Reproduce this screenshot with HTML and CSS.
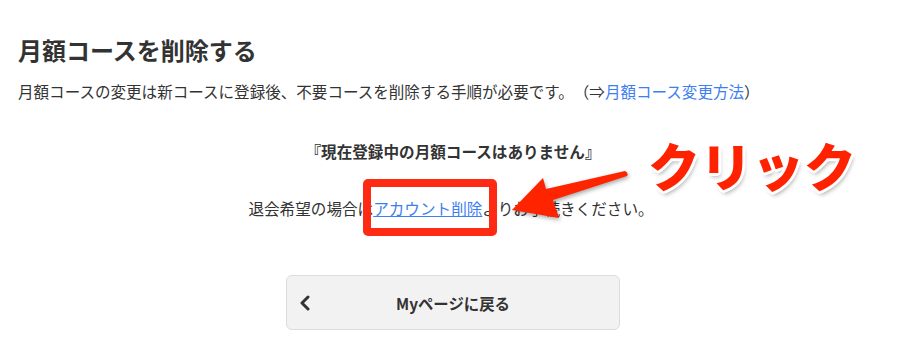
FILE: index.html
```html
<!DOCTYPE html>
<html lang="ja">
<head>
    <meta charset="UTF-8">
    <meta name="viewport" content="width=device-width, initial-scale=1.0">
    <title>月額コースを削除する</title>
    <link rel="stylesheet" href="styles.css">
</head>
<body>
    <div class="page">
        <h1>月額コースを削除する</h1>
        <p class="lead">月額コースの変更は新コースに登録後、不要コースを削除する手順が必要です。（⇒<a href="#" class="plain">月額コース変更方法</a>）</p>

        <p class="status">『現在登録中の月額コースはありません』</p>
        <p class="notice">退会希望の場合は<a href="#">アカウント削除</a>よりお手続きください。</p>

        <div class="actions">
            <a href="#" class="back">
                <svg class="chev" width="12" height="16" viewBox="0 0 12 16"><path d="M9 2 L3 8 L9 14" fill="none" stroke="#333" stroke-width="3" stroke-linecap="round" stroke-linejoin="round"/></svg>
                <span>Myページに戻る</span>
            </a>
        </div>

        <!-- annotations -->
        <div class="mark"></div>
        <svg class="arrow" width="140" height="70" viewBox="0 0 140 70">
            <path d="M7 50 L38 18 L41 29 L120 11 Q124 13 122 16 L48 40 L54 58 Z" fill="#ff2400"/>
        </svg>
        <div class="click">クリック</div>
    </div>
</body>
</html>
```

FILE: styles.css
```css
body { margin: 0; font-family: "Noto Sans CJK JP", "Noto Sans", sans-serif; color: #333; background: #fff; text-spacing-trim: space-all; }
.page { position: relative; padding: 32px 12px 0 18px; height: 320px; }
h1 { font-size: 24px; line-height: 36px; margin: 0; font-weight: bold; color: #333; }
.lead { font-size: 15.55px; line-height: 24px; margin: 11px 0 0; }
.lead a, .notice a { color: #3d7ef0; }
.lead a.plain { text-decoration: none; }
.status { font-size: 15.6px; line-height: 24px; margin: 36px 0 0; text-align: center; font-weight: bold; }
.notice { font-size: 15.6px; line-height: 24px; margin: 33px 4px 0 0; text-align: center; }
.actions { display: flex; justify-content: center; margin-top: 55px; }
.back { width: 334px; height: 55px; box-sizing: border-box; display: grid; grid-template-columns: 40px 1fr 40px; align-items: center; background: #f2f2f2; border: 1px solid #dcdcdc; border-radius: 6px; color: #333; text-decoration: none; font-weight: bold; font-size: 15.4px; }
.back .chev { margin-left: 12px; }
.back span { text-align: center; }
.mark { position: absolute; left: 363px; top: 179px; width: 134px; height: 57px; box-sizing: border-box; border: 8px solid #ff2a14; border-radius: 5px; }
.arrow { position: absolute; left: 505px; top: 160px; filter: drop-shadow(1px 2px 2px rgba(0,0,0,0.35)); }
.click { position: absolute; left: 648px; top: 134px; font-size: 52px; line-height: 62px; font-weight: 900; color: #ff2200; text-shadow: 3px 0 #fff, -3px 0 #fff, 0 3px #fff, 0 -3px #fff, 2px 2px #fff, -2px 2px #fff, 2px -2px #fff, -2px -2px #fff, 2px 4px 4px rgba(0,0,0,0.3); }
```
